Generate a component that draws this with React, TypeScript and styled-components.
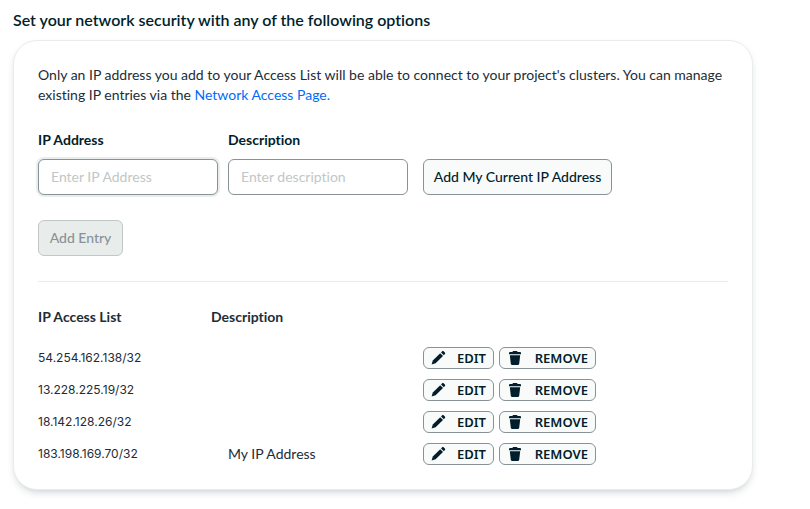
import React from "react";
import styled, { createGlobalStyle, css } from "styled-components";

const ink = "#001e2b";
const bodyInk = "#1c2d38";
const border = "#889397";
const line = "#e8edeb";

const GlobalStyle = createGlobalStyle`
  *, *::before, *::after { box-sizing: border-box; }
  body {
    margin: 0;
    background: #ffffff;
    color: ${bodyInk};
    font-family: Lato, "Noto Sans", sans-serif;
    font-size: 14px;
    font-variant-ligatures: none;
    line-height: 20px;
  }
`;

const Page = styled.main`
  max-width: 766px;
  padding: 10px 13px 18px;
`;

const Title = styled.h1`
  margin: 0 0 10px;
  color: ${ink};
  font-size: 16px;
  font-weight: 600;
  line-height: 20px;
`;

const Card = styled.section`
  padding: 24px 24px 19px;
  border: 1px solid ${line};
  border-radius: 24px;
  background: #ffffff;
  box-shadow: 0 4px 10px -4px rgba(0, 30, 43, 0.3);
`;

const Intro = styled.p`
  margin: 0 0 25px;
`;

const PageLink = styled.a`
  color: #016bf8;
  text-decoration: none;
`;

const EntryForm = styled.form`
  padding-bottom: 25px;
  border-bottom: 1px solid ${line};
`;

const FieldRow = styled.div`
  display: flex;
  align-items: flex-end;
  margin-bottom: 25px;
`;

const Field = styled.div`
  display: flex;
  flex-direction: column;
  gap: 9px;
  margin-right: 10px;

  & + & {
    margin-right: 15px;
  }
`;

const Label = styled.label`
  color: ${ink};
  font-weight: 700;
`;

const TextInput = styled.input<{ $halo?: boolean }>`
  width: 180px;
  height: 36px;
  padding: 0 12px 2px;
  border: 1px solid ${border};
  border-radius: 6px;
  outline: none;
  background: #ffffff;
  color: ${ink};
  font: inherit;
  ${(p) => p.$halo && css`box-shadow: 0 0 1px 2px ${line};`}

  &::placeholder {
    color: #c1c7c6;
    opacity: 1;
  }
`;

const Button = styled.button<{ $width: number }>`
  width: ${(p) => p.$width}px;
  height: 36px;
  padding: 0;
  border: 1px solid ${border};
  border-radius: 6px;
  background: #f9fbfa;
  color: ${ink};
  font: inherit;
  font-weight: 500;
  white-space: nowrap;

  &:disabled {
    border-color: #c1c7c6;
    background: ${line};
    color: ${border};
  }
`;

const AccessTable = styled.table`
  width: 100%;
  margin-top: 10px;
  border-collapse: collapse;
  table-layout: fixed;
`;

const HeadCell = styled.th<{ $width?: number }>`
  width: ${(p) => (p.$width ? `${p.$width}px` : "auto")};
  height: 50px;
  padding: 0;
  font-weight: 700;
  text-align: left;
`;

const Cell = styled.td<{ $indent?: boolean }>`
  height: 32px;
  padding: 0 0 0 ${(p) => (p.$indent ? "17px" : "0")};
`;

const AddressCell = styled(Cell)`
  font-family: Inter, sans-serif;
  font-size: 12px;
`;

const Actions = styled.div`
  display: flex;
  gap: 5px;
`;

const SmallButton = styled.button<{ $width: number }>`
  display: flex;
  align-items: center;
  justify-content: space-between;
  width: ${(p) => p.$width}px;
  height: 22px;
  padding: 0 7px;
  border: 1px solid ${border};
  border-radius: 6px;
  background: #f9fbfa;
  color: ${ink};
  font-family: "Noto Sans", sans-serif;
  font-size: 13px;
  font-weight: 600;
  line-height: 18px;
`;

const PencilIcon = () => (
  <svg width="16" height="16" viewBox="0 0 16 16" fill="currentColor" aria-hidden="true">
    <path d="M9.2 3.2 12 6 4.6 13.2 0.6 14.4 1.8 10.4Z" />
    <path d="M10 2.4 11.2 1.2a1 1 0 0 1 1.4 0l1.3 1.3a1 1 0 0 1 0 1.4L12.8 5.2Z" />
  </svg>
);

const TrashIcon = () => (
  <svg width="16" height="16" viewBox="0 0 16 16" fill="currentColor" aria-hidden="true">
    <path d="M5.5 2a1 1 0 0 1 1-1h3a1 1 0 0 1 1 1H13a1 1 0 0 1 1 1v1.2H2V3a1 1 0 0 1 1-1Z" />
    <path d="M2.8 5.2H13.2L12.2 13.7A1.5 1.5 0 0 1 10.7 15H5.3A1.5 1.5 0 0 1 3.8 13.7Z" />
  </svg>
);

const entries = [
  { address: "54.254.162.138/32", description: "" },
  { address: "13.228.225.19/32", description: "" },
  { address: "18.142.128.26/32", description: "" },
  { address: "183.198.169.70/32", description: "My IP Address" },
];

export default function App() {
  return (
    <>
      <GlobalStyle />
      <Page>
        <Title>Set your network security with any of the following options</Title>
        <Card>
          <Intro>
            Only an IP address you add to your Access List will be able to connect to your
            project's clusters. You can manage existing IP entries via the{" "}
            <PageLink href="#network-access">Network Access Page.</PageLink>
          </Intro>
          <EntryForm onSubmit={(e) => e.preventDefault()}>
            <FieldRow>
              <Field>
                <Label htmlFor="ip">IP Address</Label>
                <TextInput id="ip" $halo placeholder="Enter IP Address" />
              </Field>
              <Field>
                <Label htmlFor="description">Description</Label>
                <TextInput id="description" placeholder="Enter description" />
              </Field>
              <Button type="button" $width={189}>Add My Current IP Address</Button>
            </FieldRow>
            <Button type="submit" $width={85} disabled>Add Entry</Button>
          </EntryForm>
          <AccessTable>
            <thead>
              <tr>
                <HeadCell scope="col" $width={173}>IP Access List</HeadCell>
                <HeadCell scope="col" $width={212}>Description</HeadCell>
                <HeadCell as="td" />
              </tr>
            </thead>
            <tbody>
              {entries.map((entry) => (
                <tr key={entry.address}>
                  <AddressCell>{entry.address}</AddressCell>
                  <Cell $indent>{entry.description}</Cell>
                  <Cell>
                    <Actions>
                      <SmallButton type="button" $width={71}><PencilIcon />EDIT</SmallButton>
                      <SmallButton type="button" $width={97}><TrashIcon />REMOVE</SmallButton>
                    </Actions>
                  </Cell>
                </tr>
              ))}
            </tbody>
          </AccessTable>
        </Card>
      </Page>
    </>
  );
}
